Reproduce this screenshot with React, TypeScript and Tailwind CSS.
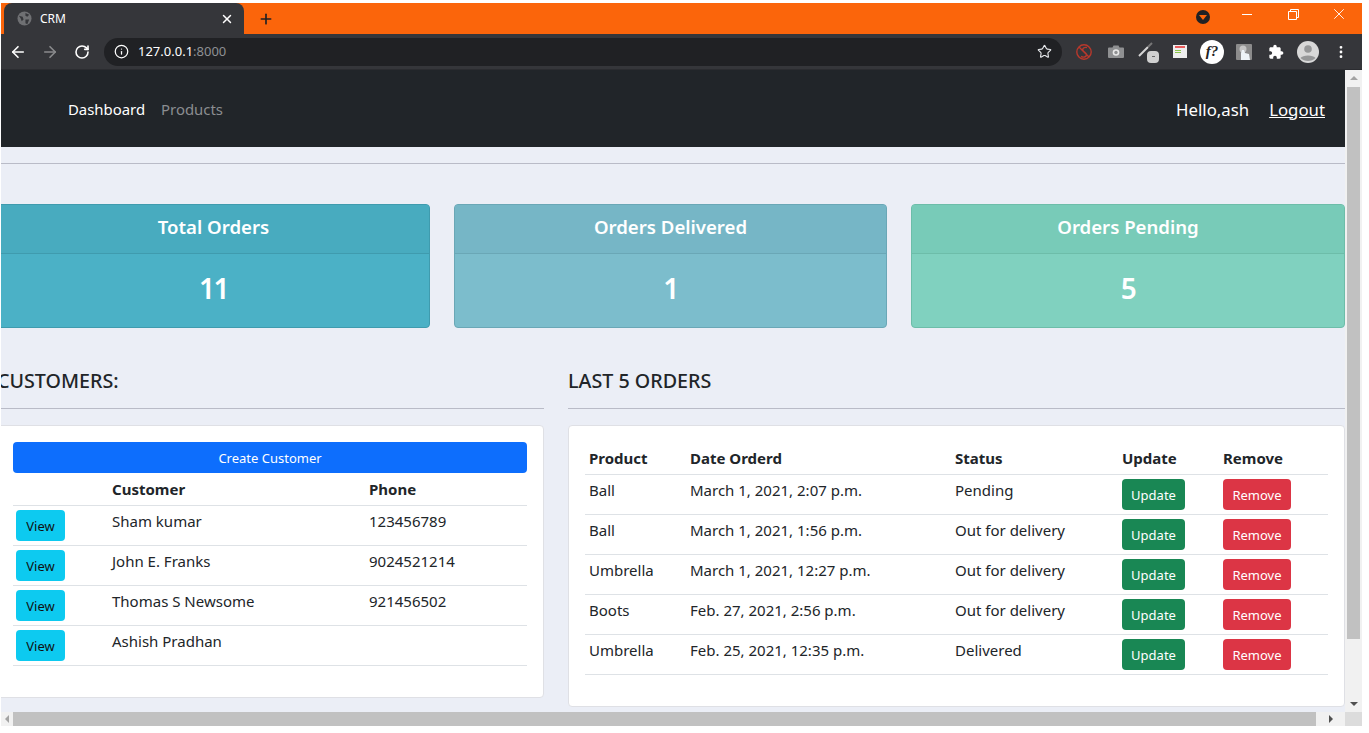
import { ArrowLeft, ArrowRight, Info, MoreVertical, Plus, RotateCw, Star, X } from "lucide-react";
import type { ReactNode } from "react";

const customers = [
  { name: "Sham kumar", phone: "123456789" },
  { name: "John E. Franks", phone: "9024521214" },
  { name: "Thomas S Newsome", phone: "921456502" },
  { name: "Ashish Pradhan", phone: "" },
];

const orders = [
  { product: "Ball", date: "March 1, 2021, 2:07 p.m.", status: "Pending" },
  { product: "Ball", date: "March 1, 2021, 1:56 p.m.", status: "Out for delivery" },
  { product: "Umbrella", date: "March 1, 2021, 12:27 p.m.", status: "Out for delivery" },
  { product: "Boots", date: "Feb. 27, 2021, 2:56 p.m.", status: "Out for delivery" },
  { product: "Umbrella", date: "Feb. 25, 2021, 12:35 p.m.", status: "Delivered" },
];

const TabStrip = () => (
  <div className="flex h-[31px] bg-[#fb650b] pl-[3px]">
    <div className="flex w-[240px] items-center rounded-t-lg bg-[#35363a] pl-[13px] pr-[10px] text-white">
      <svg width="15" height="15" viewBox="0 0 16 16" className="mr-[8px]">
        <circle cx="8" cy="8" r="7.5" fill="#6f7073" />
        <path d="M2 5l4 1 1 3-2 2-1-3zM9 2l4 2-2 2-2-1zM9 9l4 0-2 5-2-1z" fill="#35363a" />
      </svg>
      <span className="flex-1 text-xs">CRM</span>
      <X size={14} strokeWidth={2.5} />
    </div>
    <div className="ml-[14px] flex items-center">
      <Plus size={16} strokeWidth={2.5} className="text-[#202124]" />
    </div>
    <div className="ml-auto flex items-start">
      <div className="mr-[14px] mt-[7px] flex h-[14px] w-[14px] items-center justify-center rounded-full bg-[#202124]">
        <div className="h-0 w-0 border-x-[4px] border-t-[5px] border-x-transparent border-t-[#fb650b]" />
      </div>
      <div className="flex h-[22px] w-[46px] items-center justify-center text-white">
        <div className="h-px w-[10px] bg-white" />
      </div>
      <div className="flex h-[22px] w-[46px] items-center justify-center text-white">
        <svg width="11" height="11" viewBox="0 0 11 11" fill="none" stroke="currentColor">
          <path d="M.5 2.500h8v8h-8zM2.500 2.500v-2h8v8h-2" />
        </svg>
      </div>
      <div className="flex h-[22px] w-[46px] items-center justify-center text-white">
        <X size={18} strokeWidth={1.2} />
      </div>
    </div>
  </div>
);

const ExtSlot = ({ children }: { children: ReactNode }) => (
  <div className="flex h-[32px] w-[32px] items-center justify-center">{children}</div>
);

const Toolbar = () => (
  <div className="flex h-[36px] items-center border-b border-[#2b2c30] bg-[#35363a] pl-[8px]">
    <ArrowLeft size={18} strokeWidth={2.2} className="text-white" />
    <ArrowRight size={18} strokeWidth={2.2} className="ml-[14px] text-[#8a8b8d]" />
    <RotateCw size={16} strokeWidth={2.4} className="ml-[15px] text-white" />
    <div className="ml-[14px] flex h-[28px] w-[958px] items-center rounded-full bg-[#202124] pl-[10px] pr-[10px]">
      <Info size={15} strokeWidth={2} className="text-white" />
      <span className="ml-[9px] text-[13px] text-white">127.0.0.1<span className="text-[#8e9093]">:8000</span></span>
      <Star size={15} strokeWidth={1.8} className="ml-auto text-[#e8eaed]" />
    </div>
    <div className="ml-[6px] flex items-center">
      <ExtSlot>
        <svg width="16" height="16" viewBox="0 0 16 16" fill="none" stroke="#b8382c" strokeWidth="1.4">
          <circle cx="8" cy="8" r="7.200" />
          <path d="M3 3l10 10M11 3.500C8 3 6 4.500 7 6.500s4 2 3.500 4.500-3 2.500-5.500 1.500" />
        </svg>
      </ExtSlot>
      <ExtSlot>
        <svg width="16" height="13" viewBox="0 0 16 13">
          <path d="M1 2.500h3.500l1-2h5l1 2H15a1 1 0 0 1 1 1V12a1 1 0 0 1-1 1H1a1 1 0 0 1-1-1V3.500a1 1 0 0 1 1-1z" fill="#8f9092" />
          <circle cx="8" cy="7.500" r="3.300" fill="#e8e8e8" />
          <circle cx="8" cy="7.500" r="1.700" fill="#8f9092" />
        </svg>
      </ExtSlot>
      <ExtSlot>
        <div className="relative h-[22px] w-[22px]">
          <svg width="16" height="16" viewBox="0 0 16 16" strokeWidth="2" className="absolute left-[1px] top-[1px]">
            <path d="M1 14L10 5" stroke="#d6d6d6" />
            <path d="M10 5l4-4" stroke="#777" />
          </svg>
          <div className="absolute bottom-0 right-0 flex h-[12px] w-[12px] items-center justify-center rounded-sm bg-[#d0d0d0]">
            <div className="h-px w-[3px] bg-[#666]" />
          </div>
        </div>
      </ExtSlot>
      <ExtSlot>
        <div className="h-[13px] w-[14px] bg-[#eeeeee] px-[2px] pt-[1px]">
          <div className="h-[2px] w-[10px] bg-[#e85c5c]" />
          <div className="mt-[2px] h-px w-[6px] bg-[#8bc34a]" />
          <div className="mt-[1px] h-px w-[6px] bg-[#8bc34a]" />
        </div>
      </ExtSlot>
      <ExtSlot>
        <div className="flex h-[24px] w-[24px] items-center justify-center rounded-full bg-white font-['Liberation_Serif',serif] text-[15px] font-bold italic text-[#222]">f?</div>
      </ExtSlot>
      <ExtSlot>
        <svg width="16" height="16" viewBox="0 0 16 16">
          <rect width="16" height="16" rx="1" fill="#8c8c8c" />
          <circle cx="7" cy="5" r="3.500" fill="#c4c4c4" />
          <path d="M5 16V9l1-3 2 0 1 3 4 1 1 6z" fill="#eef3f7" />
        </svg>
      </ExtSlot>
      <ExtSlot>
        <svg width="16" height="16" viewBox="0 0 24 24" fill="white">
          <path d="M20.500 11H19V7c0-1.100-.9-2-2-2h-4V3.500C13 2.120 11.880 1 10.500 1S8 2.120 8 3.500V5H4c-1.100 0-1.990.9-1.990 2v3.800H3.500c1.490 0 2.700 1.210 2.700 2.700s-1.210 2.700-2.700 2.700H2V20c0 1.100.9 2 2 2h3.800v-1.500c0-1.490 1.210-2.700 2.700-2.700 1.490 0 2.700 1.210 2.700 2.700V22H17c1.100 0 2-.9 2-2v-4h1.500c1.380 0 2.500-1.120 2.500-2.500S21.880 11 20.500 11z" />
        </svg>
      </ExtSlot>
      <ExtSlot>
        <svg width="22" height="22" viewBox="0 0 22 22">
          <circle cx="11" cy="11" r="11" fill="#d8d8d8" />
          <circle cx="11" cy="8" r="3.800" fill="#35363a" fillOpacity="0.4" />
          <path d="M3.500 17c2-3.500 13-3.500 15 0-3.500 4-11.500 4-15 0z" fill="#35363a" fillOpacity="0.4" />
        </svg>
      </ExtSlot>
      <MoreVertical size={16} strokeWidth={2.2} className="ml-[9px] text-white" />
    </div>
  </div>
);

const StatCard = ({ title, value, head, body, line }: { title: string; value: string; head: string; body: string; line: string }) => (
  <div className={`overflow-hidden rounded-[4px] border text-center font-semibold text-white ${line} ${body}`}>
    <div className={`flex h-[49px] items-center justify-center border-b pb-[5px] text-[18.6px] ${head} ${line}`}>{title}</div>
    <div className="flex h-[73px] items-center justify-center pb-[6px] text-[28px] tracking-[-0.05em]">{value}</div>
  </div>
);

const SectionTitle = ({ children }: { children: string }) => (
  <div className="h-[68px] border-b border-[#b9bbc7] pt-[28px]">
    <h5 className="text-[19.7px] font-medium leading-[24px] text-[#212529]">{children}</h5>
  </div>
);

const App = () => (
  <div className="h-[733px] w-[1369px] overflow-hidden bg-white pb-[7px] pl-px pr-[7px] pt-[3px] font-['Noto_Sans',sans-serif] text-[#212529]">
    <TabStrip />
    <Toolbar />
    <div className="flex h-[656px] flex-col">
      <div className="flex min-h-0 flex-1">
        <main className="min-w-0 flex-1 overflow-hidden bg-[#ebeef6]">
          <nav className="flex h-[77px] items-center justify-between bg-[#212529] pl-[67px] pr-[20px] pt-[2px]">
            <div className="flex gap-[16px] text-[14.9px]">
              <span className="text-white">Dashboard</span>
              <span className="text-[#8b8d90]">Products</span>
            </div>
            <div className="flex gap-[20px] text-[16.8px] text-white">
              <span>Hello,ash</span>
              <span className="underline">Logout</span>
            </div>
          </nav>
          <hr className="mt-[16px] border-[#b9bbc7]" />
          <div className="-ml-[4px] w-[1348px]">
            <div className="mt-[40px] grid grid-cols-[433px_433px_1fr] gap-[24px]">
              <StatCard title="Total Orders" value="11" head="bg-[#48abbf]" body="bg-[#4bb1c6]" line="border-[#3f9bae]" />
              <StatCard title="Orders Delivered" value="1" head="bg-[#76b6c6]" body="bg-[#7cbdcc]" line="border-[#6aa7b6]" />
              <StatCard title="Orders Pending" value="5" head="bg-[#78cbb8]" body="bg-[#80d1bf]" line="border-[#6dbda9]" />
            </div>
            <div className="mt-[13px] flex items-start gap-[24px]">
              <section className="w-[547px]">
                <SectionTitle>CUSTOMERS:</SectionTitle>
                <div className="mt-[16px] h-[273px] rounded-[4px] border border-[#dfe0e5] bg-white py-[16px] pl-[15px] pr-[16px]">
                  <button className="h-[31px] w-full rounded-[4px] bg-[#0d6efd] pt-[2px] text-[13px] text-white">Create Customer</button>
                  <table className="w-full table-fixed border-collapse text-[15px]">
                    <thead>
                      <tr className="h-[32px] border-b border-[#dee2e6] text-left">
                        <th className="w-[96px]" />
                        <th className="w-[257px] px-[3px] font-bold">Customer</th>
                        <th className="px-[3px] font-bold">Phone</th>
                      </tr>
                    </thead>
                    <tbody>
                      {customers.map((c) => (
                        <tr key={c.name} className="h-[40px] border-b border-[#dee2e6] align-top">
                          <td className="px-[3px] pt-[4px]">
                            <button className="h-[31px] w-[49px] rounded-[4px] bg-[#0dcaf0] pt-[3px] text-[13px] text-[#111]">View</button>
                          </td>
                          <td className="px-[3px] pt-[3px] leading-[24px]">{c.name}</td>
                          <td className="px-[3px] pt-[3px] leading-[24px]">{c.phone}</td>
                        </tr>
                      ))}
                    </tbody>
                  </table>
                </div>
              </section>
              <section className="flex-1">
                <SectionTitle>LAST 5 ORDERS</SectionTitle>
                <div className="mt-[16px] h-[282px] rounded-[4px] border border-[#dfe0e5] bg-white p-[16px]">
                  <table className="w-full table-fixed border-collapse text-[15px]">
                    <thead>
                      <tr className="h-[32px] border-b border-[#dee2e6] text-left">
                        <th className="w-[101px] px-[4px] font-bold">Product</th>
                        <th className="w-[265px] px-[4px] font-bold">Date Orderd</th>
                        <th className="w-[167px] px-[4px] font-bold">Status</th>
                        <th className="w-[101px] px-[4px] font-bold">Update</th>
                        <th className="px-[4px] font-bold">Remove</th>
                      </tr>
                    </thead>
                    <tbody>
                      {orders.map((o) => (
                        <tr key={o.date} className="h-[40px] border-b border-[#dee2e6] align-top">
                          <td className="px-[4px] pt-[3px] leading-[24px]">{o.product}</td>
                          <td className="px-[4px] pt-[3px] leading-[24px]">{o.date}</td>
                          <td className="px-[4px] pt-[3px] leading-[24px]">{o.status}</td>
                          <td className="px-[4px] pt-[4px]">
                            <button className="h-[31px] w-[63px] rounded-[4px] bg-[#198754] pt-[3px] text-[13px] text-white">Update</button>
                          </td>
                          <td className="px-[4px] pt-[4px]">
                            <button className="h-[31px] w-[68px] rounded-[4px] bg-[#dc3545] pt-[3px] text-[13px] text-white">Remove</button>
                          </td>
                        </tr>
                      ))}
                    </tbody>
                  </table>
                </div>
              </section>
            </div>
          </div>
        </main>
        <div className="flex w-[17px] flex-col items-center bg-[#f1f1f1]">
          <div className="mt-[6px] h-0 w-0 border-x-[4px] border-b-[4px] border-x-transparent border-b-[#a3a3a3]" />
          <div className="mt-[7px] h-[552px] w-[13px] bg-[#c1c1c1]" />
          <div className="mb-[6px] mt-auto h-0 w-0 border-x-[4px] border-t-[4px] border-x-transparent border-t-[#505050]" />
        </div>
      </div>
      <div className="flex h-[14px] bg-[#f1f1f1]">
        <div className="flex w-[12px] items-center justify-center">
          <div className="h-0 w-0 border-y-[4px] border-r-[4px] border-y-transparent border-r-[#a3a3a3]" />
        </div>
        <div className="h-[14px] w-[1303px] bg-[#c1c1c1]" />
        <div className="flex w-[29px] items-center justify-center">
          <div className="h-0 w-0 border-y-[4px] border-l-[4px] border-y-transparent border-l-[#505050]" />
        </div>
        <div className="flex-1 bg-[#dcdcdc]" />
      </div>
    </div>
  </div>
);

export default App;
